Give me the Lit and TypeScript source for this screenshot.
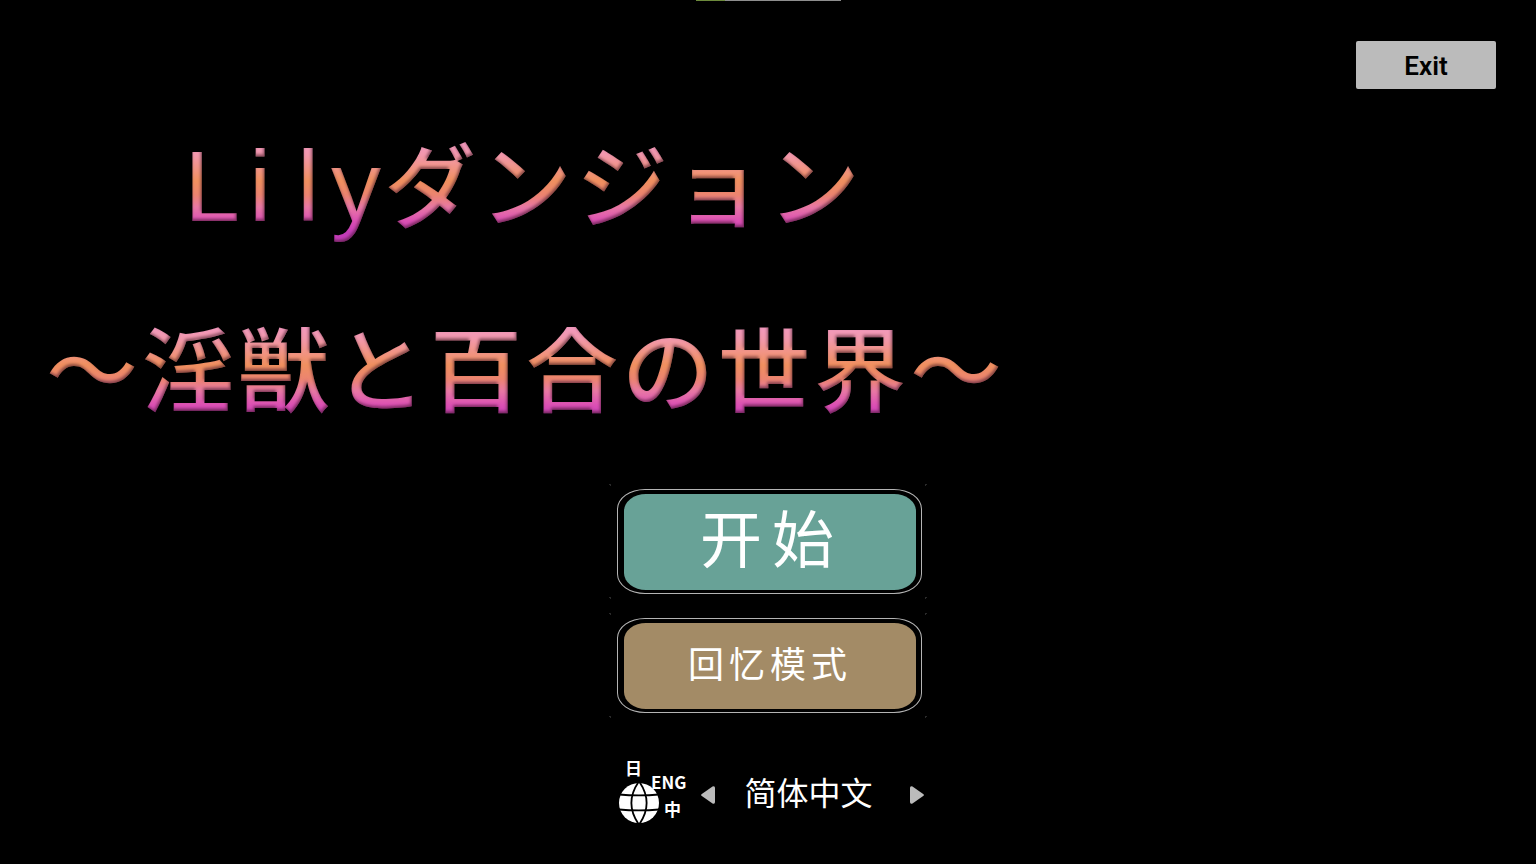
import { LitElement, html, css, svg } from "lit";
import { customElement, state } from "lit/decorators.js";

const LANGUAGES = ["简体中文", "日本語", "English"];

@customElement("language-icon")
class LanguageIcon extends LitElement {
  static styles = css`
    :host {
      display: block;
      width: 72px;
      height: 80px;
    }
    .icon {
      display: block;
    }
    .glyph {
      fill: #fff;
      font-family: "Noto Sans CJK SC", "Noto Sans CJK JP", sans-serif;
      font-weight: 700;
      font-size: 17px;
    }
  `;

  render() {
    return html`<svg class="icon" width="72" height="80" viewBox="0 -12 72 80" role="img" aria-label="Language">
      ${svg`
        <circle cx="21" cy="43" r="20" fill="#fff" />
        <g fill="none" stroke="#000" stroke-width="1.8">
          <path d="M1 34.500C12 35.500 30 35.500 41 34.500M1 49.500C12 50.500 30 50.500 41 49.500" />
          <path d="M20.500 22C11 36 11 50 20.500 64M21.500 22C31 36 31 50 21.500 64" />
        </g>
        <text class="glyph" x="7" y="15">日</text>
        <text class="glyph" x="33" y="29">ENG</text>
        <text class="glyph" x="46" y="56">中</text>
      `}
    </svg>`;
  }
}

@customElement("app-root")
export class AppRoot extends LitElement {
  @state() private language = 0;

  static styles = css`
    :host {
      display: block;
      min-height: 100vh;
      background: #000;
      color: #fff;
      font-family: "Noto Sans CJK SC", sans-serif;
    }
    * {
      box-sizing: border-box;
    }
    .screen {
      display: flex;
      flex-direction: column;
    }
    .loading {
      align-self: center;
      width: 145px;
      height: 1px;
      background: linear-gradient(to right, #6d8a3c 29px, #8e8e8e 29px);
    }
    .top {
      display: flex;
      justify-content: flex-end;
      padding: 40px 40px 0;
    }
    button {
      margin: 0;
      border: 0;
      padding: 0;
      color: inherit;
      font-family: inherit;
      cursor: pointer;
    }
    .exit {
      width: 140px;
      height: 48px;
      padding-top: 2px;
      border-radius: 2px;
      background: #bbb;
      color: #000;
      font: 600 26px/46px Roboto, sans-serif;
    }
    .defs {
      display: block;
      width: 0;
      height: 0;
    }
    .title {
      align-self: flex-start;
      margin: 0;
      padding-left: 46px;
      font: 500 92px/184px "Noto Sans CJK JP", sans-serif;
      letter-spacing: 4px;
      text-align: center;
      white-space: nowrap;
      filter: url(#bevel);
    }
    .line {
      display: block;
      color: transparent;
      background: linear-gradient(
        to bottom,
        #f29ac4 50px,
        #f298ac 66px,
        #f0905f 92px,
        #ec8470 106px,
        #e878a4 118px,
        #dc50b4 132px,
        #c43cb8 144px
      );
      -webkit-background-clip: text;
      background-clip: text;
    }
    .latin {
      display: inline-flex;
      margin-right: 4px;
      font: 400 100px/100px "Liberation Sans", sans-serif;
      letter-spacing: normal;
    }
    .letter {
      display: flex;
      justify-content: center;
      width: 48px;
    }
    .menu {
      display: flex;
      flex-direction: column;
      align-items: center;
      padding-top: 26px;
      gap: 13px;
    }
    .frame {
      --dot: radial-gradient(circle, #2a2a2a 1px, transparent 1px);
      width: 318px;
      padding: 6px 5px 5px 8px;
      background:
        var(--dot) 0 0 / 3px 3px no-repeat,
        var(--dot) 100% 0 / 3px 3px no-repeat,
        var(--dot) 0 100% / 3px 3px no-repeat,
        var(--dot) 100% 100% / 3px 3px no-repeat;
    }
    .ring {
      border: 1px solid #b4b4b4;
      border-radius: 28px / 20px;
      padding: 4px 5px 3px 6px;
    }
    .choice {
      display: block;
      width: 100%;
      border-radius: 22px / 17px;
    }
    .start {
      height: 96px;
      padding: 0 0 12px 4px;
      background: #68a297;
      font-size: 62px;
      line-height: 84px;
      letter-spacing: 10px;
    }
    .memory {
      height: 86px;
      padding-bottom: 8px;
      background: #a38b66;
      font-size: 36px;
      line-height: 78px;
      letter-spacing: 5px;
    }
    .languages {
      display: flex;
      align-items: flex-start;
      width: 318px;
      padding: 17px 2px 0 9px;
    }
    .picker {
      flex: 1;
      display: flex;
      align-items: center;
      justify-content: space-between;
      padding: 19px 0 0 10px;
    }
    .current {
      padding: 0 8px 8px 0;
      font-size: 32px;
      line-height: 48px;
    }
    .arrow {
      display: block;
      background: none;
    }
    .arrow svg {
      display: block;
    }
  `;

  private step(by: number) {
    this.language = (this.language + by + LANGUAGES.length) % LANGUAGES.length;
  }

  render() {
    return html`
      <div class="screen">
        <div class="loading"></div>
        <header class="top"><button class="exit">Exit</button></header>
        <svg class="defs" aria-hidden="true">
          <filter id="bevel" x="0" y="0" width="100%" height="100%" color-interpolation-filters="sRGB">
            <feGaussianBlur in="SourceAlpha" stdDeviation="1.5" result="soft" />
            <feOffset in="soft" dx="-1" dy="-2" result="raised" />
            <feComposite in="SourceAlpha" in2="raised" operator="out" result="edge" />
            <feFlood flood-color="#3c1424" flood-opacity="0.6" />
            <feComposite in2="edge" operator="in" result="shade" />
            <feMerge>
              <feMergeNode in="SourceGraphic" />
              <feMergeNode in="shade" />
            </feMerge>
          </filter>
        </svg>
        <h1 class="title">
          <span class="line"><span class="latin">${[..."Lily"].map((c) => html`<span class="letter">${c}</span>`)}</span>ダンジョン</span>
          <span class="line">～淫獣と百合の世界～</span>
        </h1>
        <main class="menu">
          <div class="frame"><div class="ring"><button class="choice start">开始</button></div></div>
          <div class="frame"><div class="ring"><button class="choice memory">回忆模式</button></div></div>
          <div class="languages">
            <language-icon></language-icon>
            <div class="picker">
              <button class="arrow" aria-label="Previous language" @click=${() => this.step(-1)}>
                <svg width="16" height="20" viewBox="0 0 16 20">
                  <path d="M1.500 9.200 12.500 1.500Q15 .500 15 3V17Q15 19.500 12.500 18.500L1.500 10.800Q.500 10 1.500 9.200Z" fill="#bbb" />
                </svg>
              </button>
              <span class="current" aria-live="polite">${LANGUAGES[this.language]}</span>
              <button class="arrow" aria-label="Next language" @click=${() => this.step(1)}>
                <svg width="16" height="20" viewBox="0 0 16 20">
                  <path d="M14.500 9.200 3.500 1.500Q1 .500 1 3V17Q1 19.500 3.500 18.500L14.500 10.800Q15.500 10 14.500 9.200Z" fill="#bbb" />
                </svg>
              </button>
            </div>
          </div>
        </main>
      </div>
    `;
  }
}
